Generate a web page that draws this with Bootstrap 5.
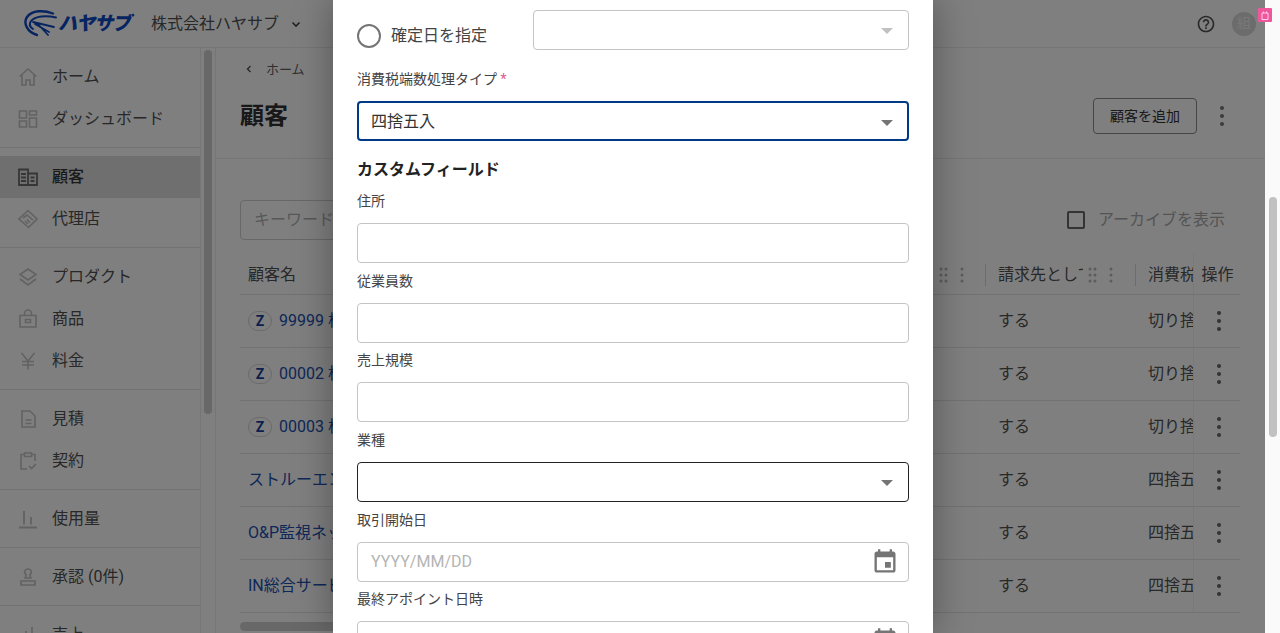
<!DOCTYPE html>
<html lang="ja">

<head>
    <meta charset="UTF-8">
    <meta name="viewport" content="width=device-width, initial-scale=1.0">
    <title>顧客</title>
    <link href="https://cdn.jsdelivr.net/npm/bootstrap@5.3.0/dist/css/bootstrap.min.css" rel="stylesheet">
    <style>
        html, body { height: 100%; overflow: hidden; }
        body { font-family: Roboto, "Noto Sans CJK JP", sans-serif; color: #505050; background: #fff; }
        .page-frame { height: 633px; }
        .page-area { width: 1265px; height: 633px; overflow: hidden; }
        .page-gutter { width: 15px; background: #fafafa; padding-top: 197px; padding-left: 4px; }
        .gutter-thumb { width: 8px; height: 240px; background: #c1c1c1; border-radius: 4px; }

        .top-bar { height: 48px; border-bottom: 1px solid #ececec; padding: 0 9px 0 24px; }
        .logo-mark { width: 34px; height: 30px; flex: none; }
        .logo-text { font-size: 19px; font-weight: 900; font-style: italic; color: #0f48c4; letter-spacing: -1px; line-height: 1; }
        .company-name { font-size: 16px; color: #505050; margin-left: 21px; }
        .company-caret { margin-left: 11px; }
        .user-circle { width: 24px; height: 24px; border-radius: 50%; background: #d8d8d8; color: #f0f0f0; font-size: 14px; margin-left: 16px; }

        .side-wrap { width: 216px; height: 585px; border-right: 1px solid #ececec; }
        .side-menu { width: 201px; height: 585px; border-right: 1px solid #ececec; overflow: hidden; padding-top: 8px; }
        .side-group { padding-bottom: 7px; margin-bottom: 8px; border-bottom: 1px solid #e4e4e4; }
        .side-item { height: 42px; padding: 0 0 0 18px; font-size: 16px; color: #505050; gap: 14px; text-decoration: none; }
        .side-item svg { width: 20px; height: 20px; flex: none; color: #c4c4c4; }
        .side-item.is-active { background: #dedede; font-weight: 500; color: #333; }
        .side-item.is-active svg { color: #6c6c6c; }
        .side-thumb { width: 8px; height: 364px; margin: 2px 0 0 3px; background: #d0d0d0; border-radius: 4px; }

        .main-area { width: 1049px; }
        .title-block { height: 111px; border-bottom: 1px solid #ececec; padding: 0 41px 0 24px; }
        .crumb-line { font-size: 13px; color: #606060; padding-top: 12px; height: 50px; gap: 12px; }
        .page-title { font-size: 24px; font-weight: 700; color: #303030; margin: 0; line-height: 36px; }
        .add-btn { font-size: 14px; height: 36px; width: 104px; padding: 0; color: #303030; border-color: #8a8a8a; border-radius: 4px; }
        .list-body { padding: 41px 25px 0 24px; }
        .search-box { width: 300px; height: 40px; border: 1px solid #d0d0d0; border-radius: 4px; padding-left: 13px; font-size: 16px; color: #b0b0b0; line-height: 38px; }
        .archive-check { font-size: 16px; color: #a8a8a8; gap: 13px; margin-right: 15px; }
        .archive-check span { width: 18px; height: 18px; border: 2.5px solid #666; border-radius: 2px; }

        .table-clip { margin-top: 13px; width: 1000px; overflow: hidden; position: relative; }
        .cust-table { table-layout: fixed; width: 1000px; margin: 0; border-collapse: collapse; font-size: 16px; }
        .cust-table th, .cust-table td { border-bottom: 1px solid #e4e4e4; padding: 0 0 0 13px; font-weight: 400; color: #505050; background: transparent; white-space: nowrap; overflow: hidden; box-shadow: none; vertical-align: middle; }
        .cust-table th { height: 41px; padding-top: 3px; }
        .cust-table td { height: 53px; }
        .cust-table th:first-child, .cust-table td:first-child { padding-left: 8px; }
        .cust-table th.act-col, .cust-table td.act-col { padding-left: 8px; border-left: 1px solid #f2f2f2; }
        .cust-table td.act-col { padding-left: 23px; }
        .head-cell { height: 22px; }
        .head-cell.with-rule { border-left: 1px solid #d8d8d8; margin-left: -13px; padding-left: 12px; }
        .head-label { width: 85px; overflow: hidden; }
        .drag-dots { width: 30px; height: 16px; color: #b8b8b8; flex: none; }
        .cust-link { color: #2050b0; text-decoration: none; }
        .z-mark { display: inline-block; width: 24px; height: 20px; line-height: 18px; border: 1px solid #d4d4d4; border-radius: 10px; text-align: center; font-size: 14px; font-weight: 700; color: #14409c; margin-right: 7px; }
        .more-dots { width: 4px; height: 20px; color: #666; }
        .more-dots.head-more { color: #777; }
        .h-scroll { width: 500px; height: 9px; margin-top: 9px; background: #d0d0d0; border-radius: 5px; }

        .dim-layer { position: absolute; top: 0; left: 0; width: 1265px; height: 633px; background: rgba(0, 0, 0, .5); }
        .form-sheet { display: block; position: absolute; top: 0; left: 333px; width: 600px; height: 633px; overflow: hidden; background: #fff; padding: 10px 24px 0; box-shadow: 0 0 36px rgba(0, 0, 0, .35); border: 0; border-radius: 0; }
        .date-radio { width: 24px; height: 24px; border: 2.5px solid #757575; border-radius: 50%; flex: none; margin-top: 14px; }
        .radio-row { height: 40px; }
        .radio-text { font-size: 16px; color: #444; margin: 14px 0 0 10px; width: 142px; }
        .sheet-label { display: block; font-size: 14px; line-height: 21px; color: #444; margin: 0 0 11px; padding-top: 8px; }
        .req-mark { color: #e25a8e; }
        .sheet-input { height: 40px; border: 1px solid #c4c4c4; border-radius: 4px; font-size: 16px; color: #444; padding: 0 13px; box-shadow: none; }
        .sheet-input.is-focused { border: 2px solid #003a84; padding: 1px 12px 0; color: #333; }
        .sheet-input.is-dark { border-color: #222; }
        .sheet-input.is-pale { width: 376px; }
        .field-wrap { margin-bottom: -.33px; }
        .caret-down { width: 0; height: 0; border-left: 6px solid transparent; border-right: 6px solid transparent; border-top: 6px solid #757575; margin: 2px 2px 0 0; }
        .caret-down.is-pale { border-top-color: #c0c0c0; }
        .hint-text { color: #b4b4b4; }
        .cal-icon { width: 28px; height: 28px; color: #757575; margin-right: -4px; }
        .section-head { font-size: 16px; font-weight: 700; color: #222; margin: 17px 0 1px; line-height: 24px; }

        .pink-tag { position: absolute; top: 8px; left: 1258px; width: 14px; height: 14px; background: #f0569c; border-radius: 1px; color: #ffd0e6; }
    </style>
</head>

<body>
    <div class="page-frame d-flex position-relative">
        <div class="page-area position-relative">
            <!-- header -->
            <header class="top-bar d-flex align-items-center">
                <svg class="logo-mark" viewBox="2 0 34 30" fill="none" stroke="#0f48c4" stroke-linecap="round">
                    <path d="M31 4.500C22 1 10 1 5 8c-4 6 0 15 10 18" stroke-width="2.400"/>
                    <path d="M34 8.500C24 6 13 7 9 12c-2 3-1 6 2 8" stroke-width="2"/>
                    <path d="M11 13l21 5M13 15l14 8M15 14l11 12" stroke-width="1.800"/>
                </svg>
                <span class="logo-text">ハヤサブ</span>
                <span class="company-name">株式会社ハヤサブ</span>
                <svg class="company-caret" width="12" height="12" viewBox="0 0 12 12" fill="none" stroke="#444" stroke-width="1.600"><path d="M2.500 4.500L6 8l3.500-3.500"/></svg>
                <svg class="ms-auto" width="20" height="20" viewBox="0 0 24 24" fill="#555"><path d="M11 18h2v-2h-2v2zm1-16C6.480 2 2 6.480 2 12s4.480 10 10 10 10-4.480 10-10S17.520 2 12 2zm0 18c-4.410 0-8-3.590-8-8s3.590-8 8-8 8 3.590 8 8-3.590 8-8 8zm0-14c-2.210 0-4 1.790-4 4h2c0-1.100.9-2 2-2s2 .9 2 2c0 2-3 1.750-3 5h2c0-2.250 3-2.500 3-5 0-2.210-1.790-4-4-4z"/></svg>
                <div class="user-circle d-flex align-items-center justify-content-center">組</div>
            </header>

            <div class="d-flex">
                <!-- sidebar -->
                <div class="side-wrap d-flex">
                    <nav class="side-menu">
                        <div class="side-group">
                            <a class="side-item d-flex align-items-center" href="#"><svg viewBox="0 0 20 20" fill="none" stroke="currentColor" stroke-width="1.600"><path d="M1.500 9.500L10 2l8.500 7.500M4 8v10h4v-5h4v5h4V8"/></svg>ホーム</a>
                            <a class="side-item d-flex align-items-center" href="#"><svg viewBox="0 0 20 20" fill="none" stroke="currentColor" stroke-width="1.600"><path d="M1.500 2h7v7h-7zM11.500 2h7v4h-7zM11.500 9h7v9h-7zM1.500 12h7v6h-7z"/></svg>ダッシュボード</a>
                        </div>
                        <div class="side-group">
                            <a class="side-item is-active d-flex align-items-center" href="#"><svg viewBox="0 0 20 20" fill="none" stroke="currentColor" stroke-width="1.800"><path d="M1 2.500h9V18H1zM10 6.500h9V18h-9zM3 7h5M3 10.500h5M3 14h5M12.500 10.500h4M12.500 14h4"/></svg>顧客</a>
                            <a class="side-item d-flex align-items-center" href="#"><svg viewBox="0 0 20 20" fill="none" stroke="currentColor" stroke-width="1.600"><path d="M10 1.500L19 10l-8.500 8.500L1 10zM5 9l4-3 6 5M7 12l3 3M9 10.500l3 3"/></svg>代理店</a>
                        </div>
                        <div class="side-group">
                            <a class="side-item d-flex align-items-center" href="#"><svg viewBox="0 0 20 20" fill="none" stroke="currentColor" stroke-width="1.600"><path d="M10 2l8 5.500-8 5.500-8-5.500zM2 12l8 6 8-6"/></svg>プロダクト</a>
                            <a class="side-item d-flex align-items-center" href="#"><svg viewBox="0 0 20 20" fill="none" stroke="currentColor" stroke-width="1.600"><path d="M2 6.500h16V18H2zM6.500 6.500V4.500a3.500 3.500 0 0 1 7 0v2M7.500 10.500h5v3h-5z"/></svg>商品</a>
                            <a class="side-item d-flex align-items-center" href="#"><svg viewBox="0 0 20 20" fill="none" stroke="currentColor" stroke-width="1.600"><path d="M3.500 2L10 10l6.500-8M10 10v8.500M4 10.500h12M4 14h12"/></svg>料金</a>
                        </div>
                        <div class="side-group">
                            <a class="side-item d-flex align-items-center" href="#"><svg viewBox="0 0 20 20" fill="none" stroke="currentColor" stroke-width="1.600"><path d="M4 2h8l5 5v11H4zM7.500 11h6M7.500 14.500h6"/></svg>見積</a>
                            <a class="side-item d-flex align-items-center" href="#"><svg viewBox="0 0 20 20" fill="none" stroke="currentColor" stroke-width="1.600"><path d="M9 18H3V3.500h3M14 3.500h3V10M6.500 2h7v3.500h-7zM11 15l2.500 2.500L18 13"/></svg>契約</a>
                        </div>
                        <div class="side-group">
                            <a class="side-item d-flex align-items-center" href="#"><svg viewBox="0 0 20 20" fill="none" stroke="currentColor" stroke-width="1.800"><path d="M1 18.500h18M6 15.500V2M13 15.500V8"/></svg>使用量</a>
                        </div>
                        <div class="side-group">
                            <a class="side-item d-flex align-items-center" href="#"><svg viewBox="0 0 20 20" fill="none" stroke="currentColor" stroke-width="1.600"><path d="M3 14h14v4H3zM10 2a3 3 0 0 1 2 5.500c-.5 2 1 3 1 3.500H7c0-.5 1.500-1.500 1-3.500A3 3 0 0 1 10 2z"/></svg>承認 (0件)</a>
                        </div>
                        <a class="side-item d-flex align-items-center" href="#"><svg viewBox="0 0 20 20" fill="none" stroke="currentColor" stroke-width="1.600"><path d="M2 18V10M8 18V6M14 18V2"/></svg>売上</a>
                    </nav>
                    <div class="side-thumb"></div>
                </div>

                <!-- main -->
                <main class="main-area">
                    <div class="title-block">
                        <div class="crumb-line d-flex">
                            <svg class="mt-1 ms-1" width="10" height="10" viewBox="0 0 10 10" fill="none" stroke="#555" stroke-width="1.400"><path d="M6.500 2L3.500 5l3 3"/></svg>
                            <span>ホーム</span>
                        </div>
                        <div class="d-flex align-items-center">
                            <h1 class="page-title">顧客</h1>
                            <button class="btn add-btn ms-auto" type="button">顧客を追加</button>
                            <svg class="more-dots head-more" style="margin-left:23px" viewBox="0 0 4 20" fill="currentColor"><circle cx="2" cy="2" r="2"/><circle cx="2" cy="10" r="2"/><circle cx="2" cy="18" r="2"/></svg>
                        </div>
                    </div>
                    <div class="list-body">
                        <div class="d-flex align-items-center justify-content-between">
                            <div class="search-box">キーワード検索</div>
                            <label class="archive-check d-flex align-items-center"><span></span>アーカイブを表示</label>
                        </div>
                        <div class="table-clip">
                            <table class="table cust-table">
                                <colgroup>
                                    <col style="width:745px"><col style="width:150px"><col style="width:58px"><col style="width:47px">
                                </colgroup>
                                <thead>
                                    <tr>
                                        <th><div class="head-cell d-flex align-items-center">顧客名
                                            <svg class="drag-dots" style="margin-left:auto;margin-right:16px" viewBox="0 0 30 16" fill="currentColor"><circle cx="2" cy="2" r="1.500"/><circle cx="7" cy="2" r="1.500"/><circle cx="2" cy="8" r="1.500"/><circle cx="7" cy="8" r="1.500"/><circle cx="2" cy="14" r="1.500"/><circle cx="7" cy="14" r="1.500"/><circle cx="23" cy="2" r="1.500"/><circle cx="23" cy="8" r="1.500"/><circle cx="23" cy="14" r="1.500"/></svg>
                                        </div></th>
                                        <th><div class="head-cell with-rule d-flex align-items-center"><span class="head-label">請求先として使用</span>
                                            <svg class="drag-dots" style="margin-left:5px" viewBox="0 0 30 16" fill="currentColor"><circle cx="2" cy="2" r="1.500"/><circle cx="7" cy="2" r="1.500"/><circle cx="2" cy="8" r="1.500"/><circle cx="7" cy="8" r="1.500"/><circle cx="2" cy="14" r="1.500"/><circle cx="7" cy="14" r="1.500"/><circle cx="23" cy="2" r="1.500"/><circle cx="23" cy="8" r="1.500"/><circle cx="23" cy="14" r="1.500"/></svg>
                                        </div></th>
                                        <th><div class="head-cell with-rule d-flex align-items-center">消費税端数</div></th>
                                        <th class="act-col">操作</th>
                                    </tr>
                                </thead>
                                <tbody id="custRows"></tbody>
                            </table>
                        </div>
                        <div class="h-scroll"></div>
                    </div>
                </main>
            </div>

            <!-- dark layer and modal -->
            <div class="dim-layer"></div>
            <div class="modal-content form-sheet">
                <div class="radio-row d-flex align-items-start">
                    <span class="date-radio"></span>
                    <span class="radio-text">確定日を指定</span>
                    <div class="form-control sheet-input is-pale d-flex align-items-center justify-content-end"><span class="caret-down is-pale"></span></div>
                </div>
                <label class="sheet-label" style="margin-top:11px">消費税端数処理タイプ <span class="req-mark">*</span></label>
                <div class="form-control sheet-input is-focused d-flex align-items-center justify-content-between">四捨五入<span class="caret-down"></span></div>
                <h2 class="section-head">カスタムフィールド</h2>
                <div class="field-wrap">
                    <label class="sheet-label">住所</label>
                    <div class="form-control sheet-input"></div>
                </div>
                <div class="field-wrap">
                    <label class="sheet-label">従業員数</label>
                    <div class="form-control sheet-input"></div>
                </div>
                <div class="field-wrap">
                    <label class="sheet-label">売上規模</label>
                    <div class="form-control sheet-input"></div>
                </div>
                <div class="field-wrap">
                    <label class="sheet-label">業種</label>
                    <div class="form-control sheet-input is-dark d-flex align-items-center justify-content-end"><span class="caret-down"></span></div>
                </div>
                <div class="field-wrap">
                    <label class="sheet-label">取引開始日</label>
                    <div class="form-control sheet-input d-flex align-items-center justify-content-between"><span class="hint-text">YYYY/MM/DD</span>
                        <svg class="cal-icon" viewBox="0 0 24 24" fill="currentColor"><path d="M17 12h-5v5h5v-5zM16 1v2H8V1H6v2H5c-1.110 0-1.990.9-1.990 2L3 19c0 1.100.89 2 2 2h14c1.100 0 2-.9 2-2V5c0-1.100-.9-2-2-2h-1V1h-2zm3 18H5V8h14v11z"/></svg>
                    </div>
                </div>
                <div class="field-wrap">
                    <label class="sheet-label">最終アポイント日時</label>
                    <div class="form-control sheet-input d-flex align-items-center justify-content-end">
                        <svg class="cal-icon" viewBox="0 0 24 24" fill="currentColor"><path d="M17 12h-5v5h5v-5zM16 1v2H8V1H6v2H5c-1.110 0-1.990.9-1.990 2L3 19c0 1.100.89 2 2 2h14c1.100 0 2-.9 2-2V5c0-1.100-.9-2-2-2h-1V1h-2zm3 18H5V8h14v11z"/></svg>
                    </div>
                </div>
            </div>
        </div>
        <div class="page-gutter"><div class="gutter-thumb"></div></div>

        <div class="pink-tag d-flex align-items-center justify-content-center">
            <svg width="8" height="9" viewBox="0 0 8 9" fill="none" stroke="currentColor" stroke-width="1"><path d="M1 2h6v6.500H1zM2.500 2V.5M5.500 2V.5"/></svg>
        </div>
    </div>

    <script src="https://cdn.jsdelivr.net/npm/bootstrap@5.3.0/dist/js/bootstrap.bundle.min.js"></script>
    <script>
        // table rows
        const rows = [
            { z: true, name: '99999 株式会社テスト', tax: '切り捨て' },
            { z: true, name: '00002 株式会社サンプル', tax: '切り捨て' },
            { z: true, name: '00003 株式会社サンプル', tax: '切り捨て' },
            { z: false, name: 'ストルーエンジニアリング', tax: '四捨五入' },
            { z: false, name: 'O&P監視ネットワーク', tax: '四捨五入' },
            { z: false, name: 'IN総合サービス', tax: '四捨五入' }
        ];
        const body = document.getElementById('custRows');
        rows.forEach(r => {
            const row = document.createElement('tr');
            row.innerHTML = `
                <td>${r.z ? '<span class="z-mark">Z</span>' : ''}<a class="cust-link" href="#">${r.name}</a></td>
                <td>する</td>
                <td>${r.tax}</td>
                <td class="act-col"><svg class="more-dots d-block" viewBox="0 0 4 20" fill="currentColor"><circle cx="2" cy="2" r="2"/><circle cx="2" cy="10" r="2"/><circle cx="2" cy="18" r="2"/></svg></td>
            `;
            body.appendChild(row);
        });
    </script>
</body>

</html>
